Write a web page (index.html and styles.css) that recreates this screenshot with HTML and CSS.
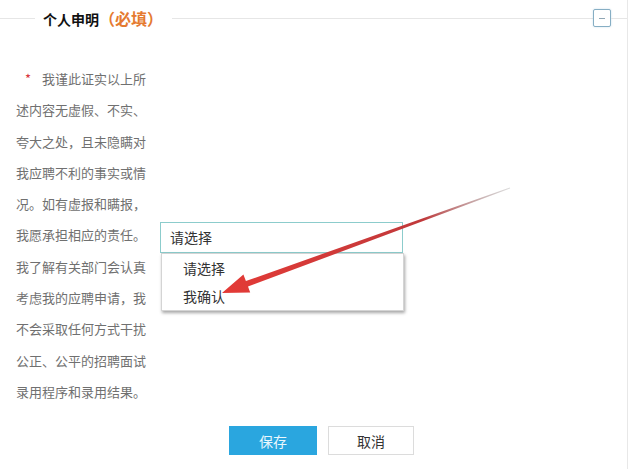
FILE: index.html
```html
<!DOCTYPE html>
<html lang="zh-CN">
<head>
  <meta charset="UTF-8" />
  <meta name="viewport" content="width=device-width, initial-scale=1.0" />
  <title>个人申明</title>
  <link rel="stylesheet" href="styles.css">
</head>
<body>
  <div class="panel">
    <div class="panel-head">
      <span class="rule rule-left"></span>
      <h2 class="panel-title">个人申明<span class="required">（必填）</span></h2>
      <span class="rule rule-fill"></span>
      <button class="toggle" title="收起"><span class="toggle-bar"></span></button>
      <span class="rule rule-right"></span>
    </div>

    <div class="form-row">
      <p class="statement">我谨此证实以上所述内容无虚假、不实、夸大之处，且未隐瞒对我应聘不利的事实或情况。如有虚报和瞒报，我愿承担相应的责任。我了解有关部门会认真考虑我的应聘申请，我不会采取任何方式干扰公正、公平的招聘面试录用程序和录用结果。</p>
      <div class="field">
        <div class="select">
          <div class="select-value">请选择</div>
          <ul class="select-menu">
            <li>请选择</li>
            <li>我确认</li>
          </ul>
        </div>
      </div>
    </div>

    <div class="actions">
      <button class="btn btn-primary">保存</button>
      <button class="btn">取消</button>
    </div>
  </div>

  <svg class="arrow" width="640" height="469" viewBox="0 0 640 469">
    <defs>
      <linearGradient id="arrowFade" x1="510" y1="188" x2="222" y2="293" gradientUnits="userSpaceOnUse">
        <stop offset="0" stop-color="#8a8a8a" stop-opacity="0.3" />
        <stop offset="0.3" stop-color="#c0393b" />
        <stop offset="1" stop-color="#e43a36" />
      </linearGradient>
    </defs>
    <polygon fill="url(#arrowFade)" points="509.8,187.6 245.9,281 243.4,274.6 222,293 250.2,292.6 248,286.6 510.2,188.4" />
  </svg>
</body>
</html>
```

FILE: styles.css
```css
body {
  margin: 0;
  background: #fff;
  font-family: "Noto Sans CJK SC", "Noto Sans", sans-serif;
  color: #666;
}
.panel {
  width: 628px;
  height: 469px;
  border-right: 1px solid #e8e8e8;
  box-sizing: border-box;
}
.panel-head {
  display: flex;
  align-items: center;
  height: 36px;
}
.rule {
  height: 1px;
  background: #e6e6e6;
}
.rule-left {
  width: 35px;
}
.rule-fill {
  flex: 1;
}
.rule-right {
  width: 16px;
}
.panel-title {
  margin: 0;
  padding: 0 9px 0 8px;
  font-size: 14px;
  font-weight: bold;
  color: #111;
  line-height: 20px;
}
.required {
  color: #e57a30;
  font-size: 16px;
}
.toggle {
  width: 18px;
  height: 18px;
  padding: 0;
  border: 1px solid #86aec4;
  border-radius: 2px;
  background: #fff;
  box-shadow: 0 0 2px rgba(120, 170, 200, 0.4);
  display: flex;
  align-items: center;
  justify-content: center;
}
.toggle-bar {
  width: 6px;
  height: 1px;
  background: #8fa6b4;
}
.form-row {
  display: flex;
  margin-top: 27px;
  padding-left: 16px;
}
.statement {
  width: 131px;
  margin: 0;
  font-size: 13px;
  line-height: 31.3px;
  color: #707070;
}
.statement::before {
  content: "*";
  display: inline-block;
  width: 10px;
  margin: 0 9px 0 7px;
  text-align: center;
  color: #d9363e;
}
.field {
  margin-left: 13px;
  padding-top: 159px;
}
.select {
  position: relative;
  width: 243px;
}
.select-value {
  height: 29px;
  line-height: 29px;
  padding-left: 9px;
  border: 1px solid #8ccccc;
  font-size: 14px;
  color: #333;
}
.select-menu {
  position: absolute;
  left: 1px;
  top: 31px;
  width: 243px;
  margin: 0;
  padding: 0;
  list-style: none;
  background: #fff;
  border: 1px solid #d4d4d4;
  box-shadow: 1px 2px 3px rgba(0, 0, 0, 0.35);
  box-sizing: border-box;
}
.select-menu li {
  height: 28px;
  line-height: 28px;
  padding-left: 21px;
  font-size: 14px;
  color: #333;
}
.actions {
  display: flex;
  gap: 11px;
  padding-left: 229px;
  margin-top: 19px;
}
.btn {
  width: 86px;
  height: 29px;
  padding: 0;
  border: 1px solid #dcdcdc;
  background: #fff;
  font-family: inherit;
  font-size: 14px;
  color: #333;
}
.btn-primary {
  width: 88px;
  border-color: #2aa6df;
  background: #2aa6df;
  color: #eaf7fd;
}
.arrow {
  position: absolute;
  left: 0;
  top: 0;
  pointer-events: none;
}
```
